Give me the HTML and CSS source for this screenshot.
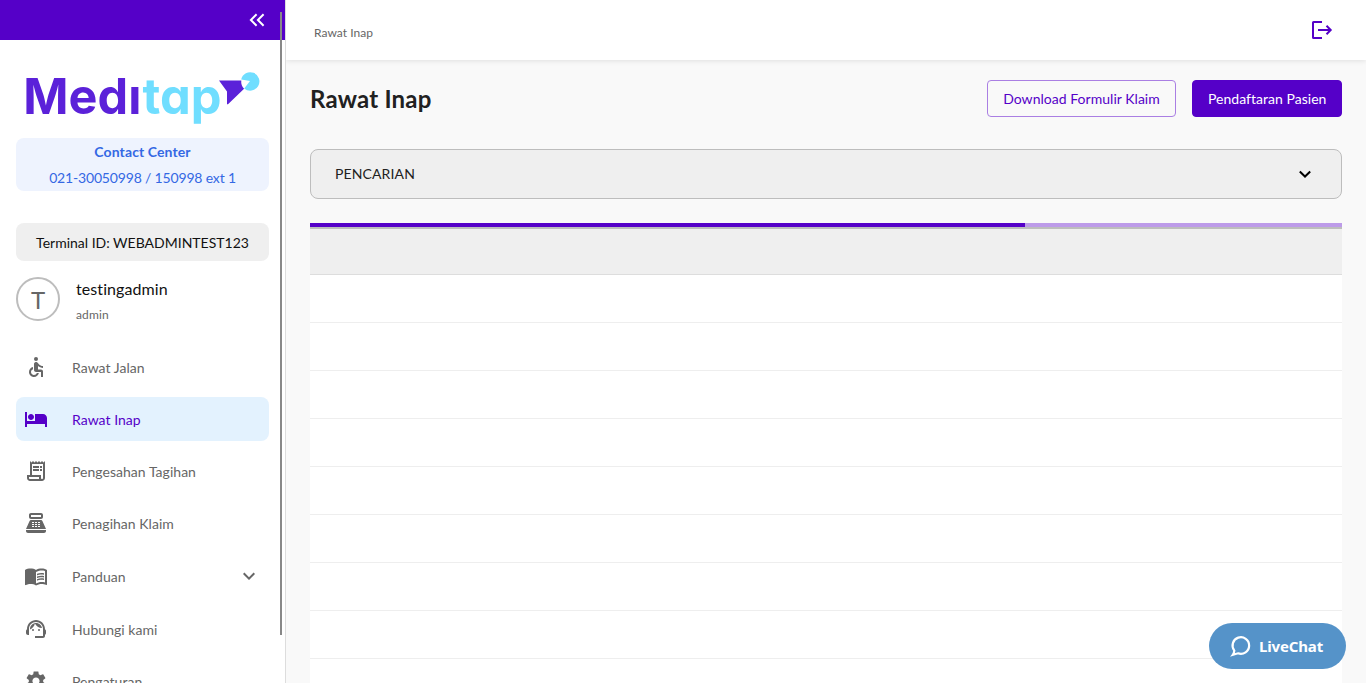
FILE: index.html
```html
<!DOCTYPE html>
<html lang="id">
<head>
<meta charset="utf-8">
<title>Rawat Inap</title>
<link rel="stylesheet" href="styles.css">
</head>
<body>
<div class="app">
  <aside class="sidebar">
    <div class="sidebar-head">
      <svg class="collapse" width="24" height="24" viewBox="0 0 24 24"><path d="M18.600 17.700 12.900 12l5.700-5.700M11.600 17.700 5.900 12l5.700-5.700"/></svg>
    </div>
    <div class="sidebar-body">
      <svg class="logo" width="253" height="70" viewBox="16 62 253 70">
        <text class="logo-dark" x="23.300" y="114.200" textLength="118" lengthAdjust="spacingAndGlyphs">Medı</text>
        <text class="logo-light" x="142.500" y="114.200" textLength="79" lengthAdjust="spacingAndGlyphs">tap</text>
        <path class="logo-sky" d="M250 81l-8.800-1.500a9.200 9.200 0 1 1 3 8.900z"/>
        <path class="logo-violet" d="M219 80.500h22.300a10 10 0 0 0 2.800 8.200L228 104.200h-1V91.500z"/>
      </svg>
      <div class="contact"><strong>Contact Center</strong><span class="phone">021-30050998 / 150998 ext 1</span></div>
      <div class="terminal">Terminal ID: WEBADMINTEST123</div>
      <div class="user">
        <div class="avatar">T</div>
        <div class="user-text"><span class="user-name">testingadmin</span><span class="user-role">admin</span></div>
      </div>
      <nav class="menu">
        <a class="item"><svg class="icon" viewBox="0 0 24 24"><circle cx="12" cy="4" r="2"/><path d="M19 13v-2c-1.540.020-3.090-.75-4.070-1.830l-1.290-1.430c-.17-.19-.38-.34-.61-.45-.01 0-.01-.01-.02-.01H13c-.35-.2-.75-.3-1.190-.26C10.760 7.110 10 8.040 10 9.090V15c0 1.100.9 2 2 2h5v5h2v-5.500c0-1.100-.9-2-2-2h-3v-3.450c1.290 1.070 3.250 1.940 5 1.950zm-6.170 5c-.41 1.160-1.520 2-2.830 2-1.660 0-3-1.340-3-3 0-1.310.84-2.410 2-2.830V12.100c-2.280.46-4 2.480-4 4.900 0 2.760 2.240 5 5 5 2.420 0 4.440-1.720 4.900-4h-2.070z"/></svg><span>Rawat Jalan</span></a>
        <a class="item active"><svg class="icon" viewBox="0 0 24 24"><path d="M7 13c1.660 0 3-1.340 3-3S8.660 7 7 7s-3 1.340-3 3 1.340 3 3 3zm12-6h-8v7H3V5H1v15h2v-3h18v3h2v-9c0-2.210-1.790-4-4-4z"/></svg><span>Rawat Inap</span></a>
        <a class="item"><svg class="icon" viewBox="0 0 24 24"><path d="M19.500 3.500 18 2l-1.500 1.500L15 2l-1.500 1.500L12 2l-1.500 1.500L9 2 7.500 3.500 6 2v14H3v3c0 1.660 1.340 3 3 3h12c1.660 0 3-1.340 3-3V2l-1.500 1.500zM15 20H6c-.55 0-1-.45-1-1v-1h10v2zm4-1c0 .55-.45 1-1 1s-1-.45-1-1v-3H8V5h11v14z"/><path d="M9 7h6v2H9zM16 7h2v2h-2zM9 10h6v2H9zM16 10h2v2h-2z"/></svg><span>Pengesahan Tagihan</span></a>
        <a class="item"><svg class="icon" viewBox="0 0 24 24"><path fill-rule="evenodd" d="M17 2H7c-1.100 0-2 .9-2 2v2c0 1.100.9 2 2 2h10c1.100 0 2-.9 2-2V4c0-1.100-.9-2-2-2zm0 4H7V4h10v2zm3 16H4c-1.100 0-2-.9-2-2v-1h20v1c0 1.100-.9 2-2 2zM18.530 10.190C18.210 9.470 17.490 9 16.700 9H7.300c-.79 0-1.510.47-1.830 1.190L2 18h20zM8 11h2v1H8zm0 2h2v1H8zm0 2h2v1H8zm3-4h2v1h-2zm0 2h2v1h-2zm0 2h2v1h-2zm3-4h2v1h-2zm0 2h2v1h-2zm0 2h2v1h-2z"/></svg><span>Penagihan Klaim</span></a>
        <a class="item expandable"><svg class="icon" viewBox="0 0 24 24"><path d="M21 5c-1.110-.35-2.330-.5-3.500-.5-1.950 0-4.050.4-5.500 1.500-1.450-1.100-3.550-1.500-5.500-1.500S2.450 4.900 1 6v14.650c0 .25.25.5.5.5.1 0 .15-.05.25-.05C3.100 20.450 5.050 20 6.500 20c1.950 0 4.050.4 5.500 1.500 1.350-.85 3.800-1.500 5.500-1.500 1.650 0 3.350.3 4.750 1.050.1.050.15.050.25.050.25 0 .5-.25.5-.5V6c-.6-.45-1.250-.75-2-1zm0 13.500c-1.100-.35-2.300-.5-3.500-.5-1.700 0-4.150.65-5.500 1.500V8c1.350-.85 3.800-1.500 5.500-1.500 1.200 0 2.400.15 3.500.5v11.500z"/><path d="M17.500 10.500c.88 0 1.730.09 2.500.26V9.240c-.79-.15-1.640-.24-2.500-.24-1.700 0-3.240.29-4.500.83v1.660c1.130-.64 2.700-.99 4.500-.99zM13 12.490v1.660c1.130-.64 2.700-.99 4.500-.99.880 0 1.730.09 2.500.26V11.900c-.79-.15-1.640-.24-2.500-.24-1.700 0-3.240.3-4.500.83zm4.500 1.840c-1.700 0-3.240.29-4.500.83v1.660c1.130-.64 2.700-.99 4.500-.99.880 0 1.730.09 2.500.26v-1.520c-.79-.16-1.640-.24-2.500-.24z"/></svg><span>Panduan</span><svg class="chevron" viewBox="0 0 24 24"><path d="M7.410 8.590 12 13.170l4.590-4.580L18 10l-6 6-6-6z"/></svg></a>
        <a class="item"><svg class="icon" viewBox="0 0 24 24"><path d="M21 12.220C21 6.730 16.740 3 12 3c-4.690 0-9 3.650-9 9.280-.6.34-1 .98-1 1.720v2c0 1.100.9 2 2 2h1v-6.100c0-3.870 3.130-7 7-7s7 3.130 7 7V19h-8v2h8c1.100 0 2-.9 2-2v-1.220c.59-.31 1-.92 1-1.640v-2.300c0-.7-.41-1.310-1-1.620z"/><circle cx="9" cy="13" r="1"/><circle cx="15" cy="13" r="1"/><path d="M18 11.030C17.520 8.180 15.040 6 12.050 6c-3.030 0-6.290 2.510-6.030 6.450 2.470-1.010 4.330-3.210 4.860-5.890 1.310 2.630 4 4.440 7.120 4.470z"/></svg><span>Hubungi kami</span></a>
        <a class="item"><svg class="icon" viewBox="0 0 24 24"><path d="M19.140 12.940c.04-.3.060-.61.060-.94 0-.32-.02-.64-.07-.94l2.030-1.580c.18-.14.23-.41.12-.61l-1.920-3.320c-.12-.22-.37-.29-.59-.22l-2.390.96c-.5-.38-1.030-.7-1.620-.94l-.36-2.540c-.04-.24-.24-.41-.48-.41h-3.840c-.24 0-.43.17-.47.41l-.36 2.540c-.59.24-1.130.57-1.620.94l-2.390-.96c-.22-.08-.47 0-.59.22L2.740 8.870c-.12.21-.08.47.12.61l2.030 1.580c-.05.3-.09.63-.09.94s.02.64.07.94l-2.030 1.580c-.18.14-.23.41-.12.61l1.920 3.320c.12.22.37.29.59.22l2.390-.96c.5.38 1.030.7 1.620.94l.36 2.540c.05.24.24.41.48.41h3.840c.24 0 .44-.17.47-.41l.36-2.540c.59-.24 1.130-.56 1.620-.94l2.390.96c.22.08.47 0 .59-.22l1.920-3.320c.12-.22.07-.47-.12-.61l-2.010-1.580zM12 15.600c-1.980 0-3.600-1.620-3.600-3.600s1.620-3.600 3.600-3.600 3.600 1.620 3.600 3.600-1.620 3.600-3.600 3.600z"/></svg><span>Pengaturan</span></a>
      </nav>
    </div>
    <div class="scroll-thumb"></div>
  </aside>
  <div class="page">
    <header class="topbar">
      <span class="crumb">Rawat Inap</span>
      <svg class="logout" width="24" height="24" viewBox="0 0 24 24"><path d="M12 4H3.500a.5.5 0 0 0-.5.5v15a.5.5 0 0 0 .5.5H12M8 12h13M16.500 7.800l4.200 4.200-4.200 4.200"/></svg>
    </header>
    <main class="content">
      <div class="title-row">
        <h1>Rawat Inap</h1>
        <div class="actions"><button class="btn outline">Download Formulir Klaim</button><button class="btn solid">Pendaftaran Pasien</button></div>
      </div>
      <div class="search-panel"><span>PENCARIAN</span><svg width="24" height="24" viewBox="0 0 24 24"><path d="M6.800 9.500 12 14.500l5.200-5"/></svg></div>
      <div class="progress"><div class="progress-value"></div></div>
      <div class="table">
        <div class="table-head"></div>
        <div class="row"></div><div class="row"></div><div class="row"></div><div class="row"></div><div class="row"></div><div class="row"></div><div class="row"></div><div class="row"></div><div class="row"></div>
      </div>
    </main>
  </div>
</div>
<button class="livechat"><svg width="22" height="22" viewBox="0 0 22 22"><path d="M4.300 15.600A8.300 8.300 0 1 1 8 18.300L2.800 19.800c1-1.400 1.400-2.800 1.500-4.200z"/></svg><span>LiveChat</span></button>
</body>
</html>
```

FILE: styles.css
```css
* { box-sizing: border-box; }
body { margin: 0; font-family: Lato, "Liberation Sans", sans-serif; font-size: 14px; color: #212121; overflow: hidden; }
.app { display: flex; height: 683px; overflow: hidden; background: #f9f9f9; }
.sidebar { position: relative; width: 286px; flex: none; background: #fff; border-right: 1px solid #ddd; overflow: hidden; }
.sidebar-head { display: flex; justify-content: flex-end; height: 40px; padding: 8px 16px; background: #5500c8; }
.collapse { fill: none; stroke: #fff; stroke-width: 2; }
.sidebar-body { padding: 22px 16px 0; }
.logo { display: block; overflow: visible; }
.logo text { font: 700 50px Inter, sans-serif; font-feature-settings: "cv11"; }
.logo-dark, .logo-violet { fill: #5b21d9; }
.logo-light, .logo-sky { fill: #70deff; }
.contact { display: flex; flex-direction: column; align-items: center; height: 53px; margin-top: 6px; background: #eef3fe; border-radius: 8px; color: #3468e4; font-size: 14px; line-height: 26px; letter-spacing: .1px; padding-top: 1px; }
.phone { letter-spacing: -.17px; }
.terminal { display: flex; align-items: center; justify-content: center; height: 38px; margin-top: 32px; padding-top: 1px; background: #efefef; border-radius: 8px; color: #111; letter-spacing: 0; }
.user { display: flex; gap: 16px; margin-top: 16px; height: 44px; }
.avatar { display: flex; align-items: center; justify-content: center; width: 44px; height: 44px; padding-top: 1px; border: 2px solid #bdbdbd; border-radius: 50%; color: #666; font-size: 24px; }
.user-text { display: flex; flex-direction: column; }
.user-name { font-size: 16px; line-height: 24px; letter-spacing: .08px; color: #111; }
.user-role { font-size: 12px; line-height: 20px; margin-top: 4px; letter-spacing: .12px; color: #666; }
.menu { display: flex; flex-direction: column; gap: 8px; margin-top: 24px; }
.item { display: flex; align-items: center; height: 44px; padding: 0 8px; border-radius: 8px; color: #666; letter-spacing: .03px; }
.item span { margin-left: 24px; padding-top: 1px; line-height: 17px; }
.icon { width: 24px; height: 24px; fill: currentColor; }
.active { background: #e3f2fe; color: #5500c8; }
.expandable { height: 46px; }
.chevron { width: 24px; height: 24px; margin-left: auto; fill: currentColor; }
.scroll-thumb { position: absolute; left: 280px; top: 12px; width: 2px; height: 623px; background: #888; }
.page { flex: 1; display: flex; flex-direction: column; min-width: 0; }
.topbar { display: flex; align-items: center; justify-content: space-between; flex: none; height: 60px; padding: 0 31px 0 28px; background: #fff; box-shadow: 0 1px 5px rgba(0,0,0,.1); }
.logout { margin-right: 1px; fill: none; stroke: #5500c8; stroke-width: 2; }
.crumb { padding-top: 5px; font-size: 12px; letter-spacing: .05px; color: #666; }
.content { padding: 20px 24px 0; }
.title-row { display: flex; align-items: center; justify-content: space-between; height: 37px; }
h1 { margin: 0; font-size: 24px; line-height: 32px; font-weight: 700; letter-spacing: .2px; }
.actions { display: flex; gap: 16px; }
.btn { height: 37px; padding: 0 15px; border: 1px solid #5500c8; border-radius: 4px; font: 14px/17px Lato, sans-serif; letter-spacing: .03px; white-space: nowrap; }
.outline { width: 189px; border-color: #aa7fe3; background: transparent; color: #5500c8; }
.solid { width: 150px; background: #5500c8; color: #fff; }
.search-panel { display: flex; align-items: center; justify-content: space-between; height: 50px; margin-top: 32px; padding: 0 24px; border: 1px solid #bdbdbd; border-radius: 8px; background: #efefef; letter-spacing: .12px; }
.search-panel span { padding-bottom: 1px; }
.search-panel svg { fill: none; stroke: #000; stroke-width: 2; }
.progress { height: 4px; margin-top: 24px; background: #bd9be9; }
.progress-value { width: 715px; height: 4px; background: #5500c8; }
.table { border-top: 2px solid #bdbdbd; background: #fff; }
.table-head { height: 46px; background: #efefef; border-bottom: 1px solid #ddd; }
.row { height: 48px; border-bottom: 1px solid #eee; }
.livechat { position: absolute; left: 1209px; top: 623px; display: flex; align-items: center; gap: 7px; width: 137px; height: 46px; padding: 0 21px; border: 0; border-radius: 23px; background: rgba(76,141,198,.95); color: #fff; font: 700 15px "Noto Sans", sans-serif; letter-spacing: -.15px; }
.livechat svg { fill: none; stroke: #fff; stroke-width: 2.200; flex: none; }
```
